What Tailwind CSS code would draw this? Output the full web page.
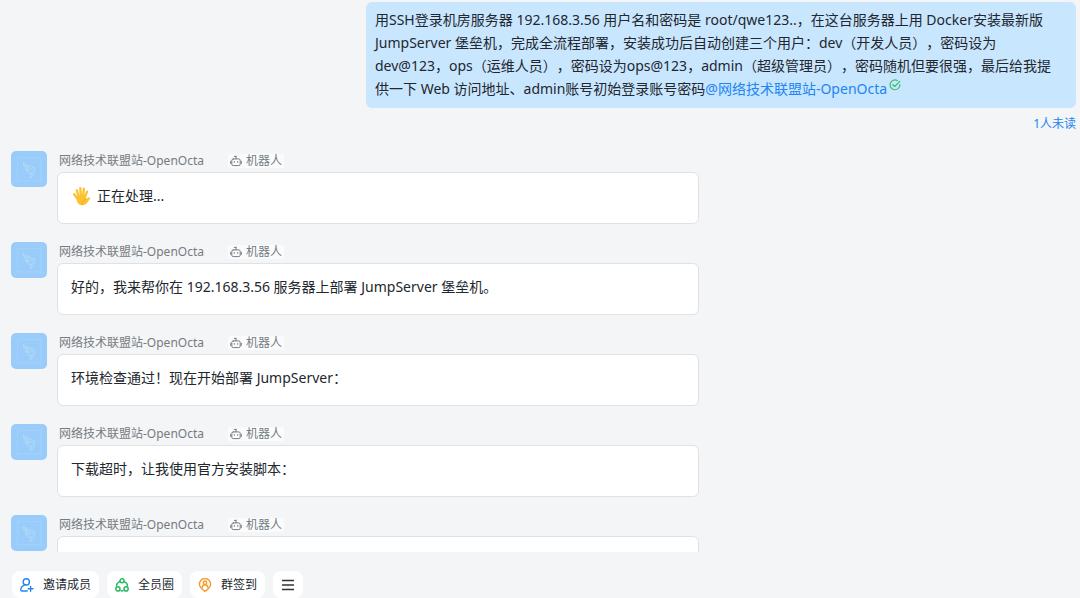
<!DOCTYPE html>
<html lang="zh-CN">
<head>
<meta charset="utf-8">
<meta name="viewport" content="width=device-width, initial-scale=1">
<title>网络技术联盟站-OpenOcta</title>
<script src="https://cdn.jsdelivr.net/npm/@tailwindcss/browser@4"></script>
</head>
<body class="flex h-screen flex-col overflow-hidden bg-[#f3f5f7] font-['Noto_Sans','Noto_Sans_CJK_SC',sans-serif] text-sm text-[#22272e] [text-spacing-trim:space-all]">

<svg class="hidden" aria-hidden="true">
  <symbol id="avatar" viewBox="0 0 36 36">
    <rect width="36" height="36" rx="5" fill="#99ccfb"/>
    <path d="M6.500 6.500H30V30H6.500ZM30 3V33M3 30H33" fill="none" stroke="#a3d2f9" stroke-width=".8"/>
    <path d="M12 11.500 C15 14.500 20 15 23.500 17 C24.500 20 22.500 24 19.500 27 L20 23 C17 22 15 20.500 14.500 18 L18.500 19.500 C15 17.500 12.500 15 12 11.500Z" fill="none" stroke="#b6dcf2" stroke-width=".9"/>
    <path d="M14 14 C17 17 20 17.500 22 18.500 M20 23 L22 20" fill="none" stroke="#bfe0e8" stroke-width=".7"/>
  </symbol>
  <symbol id="robot" viewBox="0 0 12 12">
    <path d="M6 1.200V3.800M4.300 1.400H6M3.300 3.900H8.700Q10.200 3.900 10.200 5.400V9.200Q10.200 10.600 8.700 10.600H3.300Q1.800 10.600 1.800 9.200V5.400Q1.800 3.900 3.300 3.900ZM.7 6.300V8.500M11.300 6.300V8.500M4.300 6.500V7.300M7.700 6.500V7.300" fill="none" stroke="#777b80" stroke-width="1" stroke-linecap="round"/>
  </symbol>
</svg>

<main class="flex min-h-0 flex-1 flex-col overflow-hidden px-1 pt-0.5">
  <section class="flex shrink-0 flex-col items-end">
    <p class="w-full max-w-[710px] rounded-md bg-[#c9e6ff] px-[9px] pt-1.5 pb-2 leading-[23px]">用SSH登录机房服务器 192.168.3.56 用户名和密码是 root/qwe123..，在这台服务器上用 Docker安装最新版<br>JumpServer 堡垒机，完成全流程部署，安装成功后自动创建三个用户：dev（开发人员），密码设为<br>dev@123，ops（运维人员），密码设为ops@123，admin（超级管理员），密码随机但要很强，最后给我提<br>供一下 Web 访问地址、admin账号初始登录账号密码<a href="#" class="text-[#2185f2]">@网络技术联盟站-OpenOcta</a><svg class="ml-0.5 inline-block size-3 align-[3px]" viewBox="0 0 12 12" fill="none" stroke="#35bd68" stroke-width="1.100" stroke-linecap="round" stroke-linejoin="round"><path d="M8.500 1.600A4.900 4.900 0 1 0 10.900 5.500M3.700 5.500 5.700 7.500 10.800 2.400"/></svg></p>
    <a href="#" class="mt-2 text-xs leading-4 text-[#2185f2]">1人未读</a>
  </section>

  <section class="mt-[19px] flex shrink-0 flex-col gap-[18px] pl-[7px]">
    <article class="flex gap-2.5">
      <svg class="size-9 shrink-0"><use href="#avatar"/></svg>
      <div class="min-w-0 max-w-[642px] flex-1">
        <header class="flex h-[21px] items-center gap-6 pb-0.5 pl-0.5 text-xs text-[#777b80]"><span>网络技术联盟站-OpenOcta</span><span class="flex h-3.5 items-center gap-1 rounded-xs bg-[#fafbfc] px-0.5"><svg class="size-3"><use href="#robot"/></svg>机器人</span></header>
        <p class="flex h-[52px] items-start rounded-md border border-[#dfe1e4] bg-white px-[13px] pt-[11px] leading-6">
          <svg class="mt-0.5 mr-1.5 size-5" viewBox="0 0 20 20" role="img" aria-label="手掌"><g fill="none" stroke="#fcc22f" stroke-width="2.300" stroke-linecap="round"><path d="M8 12 5.800 4.300M9.800 10 9.300 2.200M12 10 12.900 2.700M14 11 16 5.600M7 13.500 3.200 8.300"/></g><path d="M5.800 11Q10 8 15.200 9.800L14.900 12.800 17.500 11.500Q18.900 11 19.300 12.300L15.800 17.200Q14 19.500 10.600 19.200 6.900 18.800 6 15Z" fill="#fcc22f"/><path d="M10.800 18.500Q10.800 15 14.500 13.500" fill="none" stroke="#e8a024" stroke-width=".7" stroke-linecap="round"/></svg>正在处理...</p>
      </div>
    </article>
    <article class="flex gap-2.5">
      <svg class="size-9 shrink-0"><use href="#avatar"/></svg>
      <div class="min-w-0 max-w-[642px] flex-1">
        <header class="flex h-[21px] items-center gap-6 pb-0.5 pl-0.5 text-xs text-[#777b80]"><span>网络技术联盟站-OpenOcta</span><span class="flex h-3.5 items-center gap-1 rounded-xs bg-[#fafbfc] px-0.5"><svg class="size-3"><use href="#robot"/></svg>机器人</span></header>
        <p class="h-[52px] rounded-md border border-[#dfe1e4] bg-white px-[13px] pt-[11px] leading-6">好的，我来帮你在 192.168.3.56 服务器上部署 JumpServer 堡垒机。</p>
      </div>
    </article>
    <article class="flex gap-2.5">
      <svg class="size-9 shrink-0"><use href="#avatar"/></svg>
      <div class="min-w-0 max-w-[642px] flex-1">
        <header class="flex h-[21px] items-center gap-6 pb-0.5 pl-0.5 text-xs text-[#777b80]"><span>网络技术联盟站-OpenOcta</span><span class="flex h-3.5 items-center gap-1 rounded-xs bg-[#fafbfc] px-0.5"><svg class="size-3"><use href="#robot"/></svg>机器人</span></header>
        <p class="h-[52px] rounded-md border border-[#dfe1e4] bg-white px-[13px] pt-[11px] leading-6">环境检查通过！现在开始部署 JumpServer：</p>
      </div>
    </article>
    <article class="flex gap-2.5">
      <svg class="size-9 shrink-0"><use href="#avatar"/></svg>
      <div class="min-w-0 max-w-[642px] flex-1">
        <header class="flex h-[21px] items-center gap-6 pb-0.5 pl-0.5 text-xs text-[#777b80]"><span>网络技术联盟站-OpenOcta</span><span class="flex h-3.5 items-center gap-1 rounded-xs bg-[#fafbfc] px-0.5"><svg class="size-3"><use href="#robot"/></svg>机器人</span></header>
        <p class="h-[52px] rounded-md border border-[#dfe1e4] bg-white px-[13px] pt-[11px] leading-6">下载超时，让我使用官方安装脚本：</p>
      </div>
    </article>
    <article class="flex gap-2.5">
      <svg class="size-9 shrink-0"><use href="#avatar"/></svg>
      <div class="min-w-0 max-w-[642px] flex-1">
        <header class="flex h-[21px] items-center gap-6 pb-0.5 pl-0.5 text-xs text-[#777b80]"><span>网络技术联盟站-OpenOcta</span><span class="flex h-3.5 items-center gap-1 rounded-xs bg-[#fafbfc] px-0.5"><svg class="size-3"><use href="#robot"/></svg>机器人</span></header>
        <p class="h-[52px] rounded-md border border-[#dfe1e4] bg-white"></p>
      </div>
    </article>
  </section>
</main>

<nav class="flex shrink-0 gap-2 px-3 pt-[19px] text-xs" aria-label="群工具">
  <button class="flex h-[27px] items-center gap-[9px] rounded-lg bg-white px-2">
    <svg class="size-3.5" viewBox="0 0 14 14" fill="none" stroke="#2185f2" stroke-width="1.400" stroke-linecap="round" stroke-linejoin="round"><circle cx="6.300" cy="3.900" r="3.100"/><path d="M4.800 6.900C2.300 7.800 .8 9.700 .8 12Q.8 13 1.900 13H7.200M10.600 8.400V13.200M8.200 10.800H13"/></svg>邀请成员</button>
  <button class="flex h-[27px] items-center gap-[9px] rounded-lg bg-white px-2">
    <svg class="size-3.5" viewBox="0 0 14 14" fill="none" stroke="#23b85b" stroke-width="1.400" stroke-linecap="round"><circle cx="7" cy="2.800" r="2"/><circle cx="2.900" cy="10.900" r="2.100"/><circle cx="11.100" cy="10.900" r="2.100"/><path d="M4.600 3.600Q1.600 5 1.500 8M9.400 3.600Q12.400 5 12.500 8M5.800 12.700Q7 13.200 8.200 12.700"/></svg>全员圈</button>
  <button class="flex h-[27px] items-center gap-[9px] rounded-lg bg-white px-2">
    <svg class="size-3.5" viewBox="0 0 14 14" fill="none" stroke="#f79a2b" stroke-width="1.400" stroke-linecap="round" stroke-linejoin="round"><path d="M7 13.400C4 11.500 1.400 9.200 1.400 6.100A5.600 5.600 0 0 1 12.600 6.100C12.600 9.200 10 11.500 7 13.400Z"/><circle cx="7" cy="4.700" r="1.700"/><path d="M4.200 9.300Q4.400 6.700 7 6.700T9.800 9.300"/></svg>群签到</button>
  <button class="flex h-[27px] items-center rounded-lg bg-white px-2" aria-label="更多">
    <svg class="size-3.5" viewBox="0 0 14 14" stroke="#333" stroke-width="1.300"><path d="M1 2.500H13M1 7H13M1 11.500H13"/></svg></button>
</nav>
</body>
</html>
